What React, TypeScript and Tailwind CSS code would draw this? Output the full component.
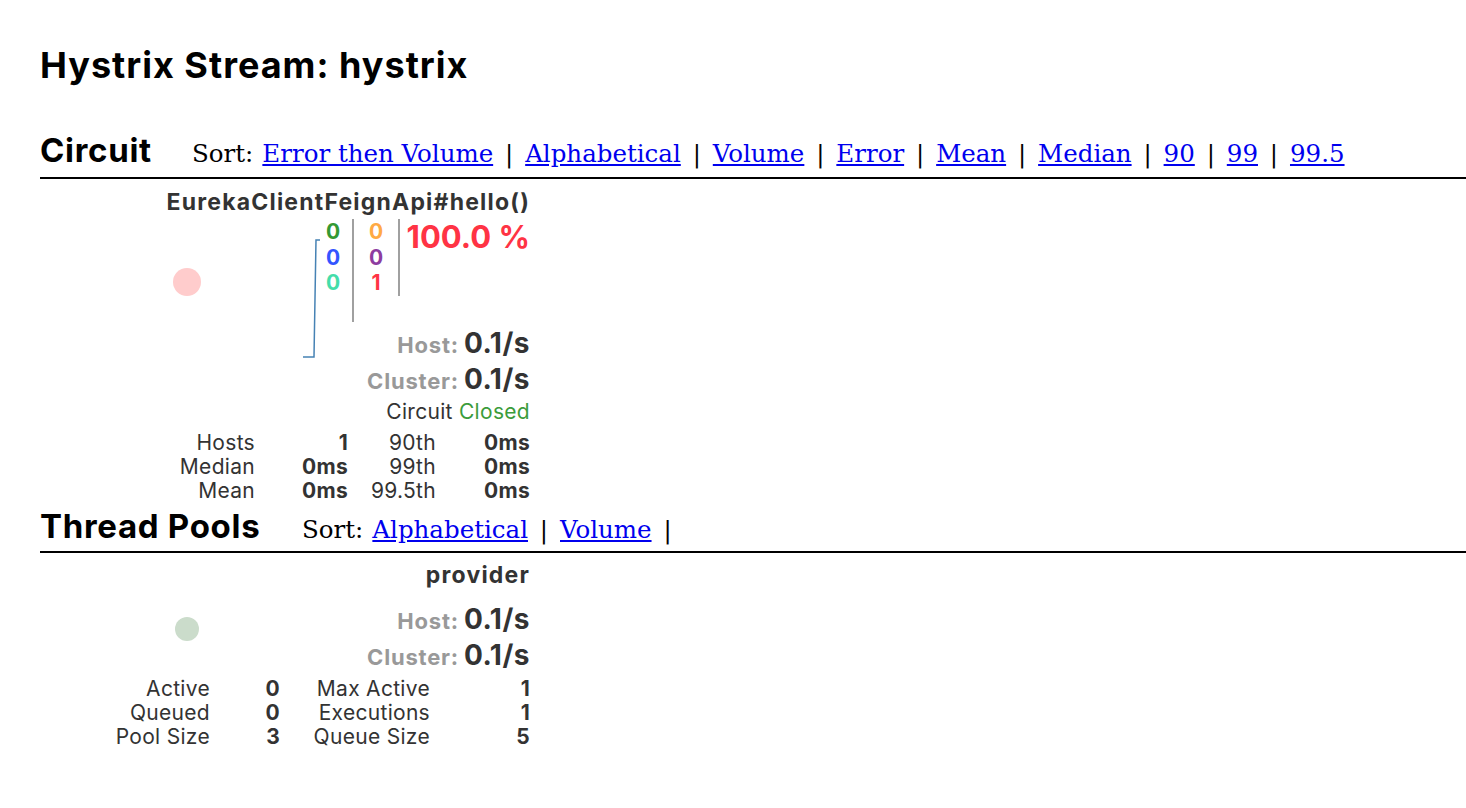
import React from "react";

const circuitLinks = ["Error then Volume", "Alphabetical", "Volume", "Error", "Mean", "Median", "90", "99", "99.5"];
const poolLinks = ["Alphabetical", "Volume"];

function SortBar({ links, trailing }: { links: string[]; trailing?: boolean }) {
  return (
    <div className="font-['DejaVu_Serif',serif] text-[24.5px] text-black flex items-baseline">
      <span className="mr-[9px]">Sort:</span>
      {links.map((l, i) => (
        <React.Fragment key={l}>
          {i > 0 && <span className="inline-block w-[32px] text-center">|</span>}
          <a href="#" className="text-[#0000ee] underline">{l}</a>
        </React.Fragment>
      ))}
      {trailing && <span className="inline-block w-[32px] text-center">|</span>}
    </div>
  );
}

function Rate({ label, value }: { label: string; value: string }) {
  return (
    <div className="flex items-baseline justify-end leading-[34px]">
      <span className="text-[22px] font-bold tracking-[0.8px] text-[#999999] mr-[5px]">{label}</span>
      <span className="text-[28px] font-bold tracking-[0.5px] text-[#333333]">{value}</span>
    </div>
  );
}

export default function App() {
  return (
    <div className="min-h-screen bg-white font-['Inter',sans-serif] text-black pl-[40px] pt-[40px]">
      <h1 className="text-[36px] font-bold tracking-[1px] leading-[50px]">Hystrix Stream: hystrix</h1>

      {/* Circuit section */}
      <div className="mt-[40px] flex items-baseline leading-[40px]">
        <h2 className="text-[33px] font-bold tracking-[0.7px] w-[152px]">Circuit</h2>
        <SortBar links={circuitLinks} />
      </div>
      <div className="mt-[3px] h-[2px] bg-black" />

      <div className="relative w-[490px]">
        <svg className="absolute left-0 top-0" width="490" height="250">
          <circle cx="147" cy="103" r="14" fill="#ffcccc" />
          <polyline points="280,61 276,61 274,178 263,178" fill="none" stroke="#4682b4" strokeWidth="1.5" />
        </svg>
        <div className="relative text-[#333333]">
          <div className="pt-[10px] text-right text-[23px] font-bold tracking-[1.2px] leading-[26px]">EurekaClientFeignApi#hello()</div>
          <div className="mt-[4px] flex justify-end items-start font-bold text-[21px] leading-[25.5px]">
            <div className="w-[38px] text-center">
              <div className="text-[#339933]">0</div>
              <div className="text-[#3355ff]">0</div>
              <div className="text-[#44ddaa]">0</div>
            </div>
            <div className="w-[2px] h-[103px] bg-[#a0a0a0]" />
            <div className="w-[44px] text-center">
              <div className="text-[#ffaa44]">0</div>
              <div className="text-[#8d3ca0]">0</div>
              <div className="text-[#ff3344]">1</div>
            </div>
            <div className="w-[2px] h-[77px] bg-[#a0a0a0]" />
            <div className="w-[130px] text-right text-[31px] leading-[35px] text-[#ff3344]">100.0 %</div>
          </div>
          <div className="mt-[4px]">
            <Rate label="Host:" value="0.1/s" />
            <Rate label="Cluster:" value="0.1/s" />
          </div>
          <div className="text-right text-[21px] tracking-[0.3px] leading-[28px]">
            Circuit <span className="text-[#3b9c3b]">Closed</span>
          </div>
          <div className="mt-[5px] grid grid-cols-[215px_93px_88px_94px] text-[21px] tracking-[0.3px] leading-[24px] text-right">
            <div>Hosts</div><div className="font-bold">1</div><div>90th</div><div className="font-bold">0ms</div>
            <div>Median</div><div className="font-bold">0ms</div><div>99th</div><div className="font-bold">0ms</div>
            <div>Mean</div><div className="font-bold">0ms</div><div>99.5th</div><div className="font-bold">0ms</div>
          </div>
        </div>
      </div>

      {/* Thread Pools section */}
      <div className="mt-[3px] flex items-baseline leading-[40px]">
        <h2 className="text-[33px] font-bold tracking-[0.7px] w-[262px]">Thread Pools</h2>
        <SortBar links={poolLinks} trailing />
      </div>
      <div className="mt-[1px] h-[2px] bg-black" />

      <div className="relative w-[490px]">
        <svg className="absolute left-0 top-0" width="490" height="200">
          <circle cx="147" cy="76" r="12" fill="#cbdccb" />
        </svg>
        <div className="relative text-[#333333]">
          <div className="pt-[9px] text-right text-[23px] font-bold tracking-[1.2px] leading-[26px]">provider</div>
          <div className="mt-[14px]">
            <Rate label="Host:" value="0.1/s" />
            <Rate label="Cluster:" value="0.1/s" />
          </div>
          <div className="mt-[3px] grid grid-cols-[170px_70px_150px_100px] text-[21px] tracking-[0.3px] leading-[24px] text-right">
            <div>Active</div><div className="font-bold">0</div><div>Max Active</div><div className="font-bold">1</div>
            <div>Queued</div><div className="font-bold">0</div><div>Executions</div><div className="font-bold">1</div>
            <div>Pool Size</div><div className="font-bold">3</div><div>Queue Size</div><div className="font-bold">5</div>
          </div>
        </div>
      </div>
    </div>
  );
}
